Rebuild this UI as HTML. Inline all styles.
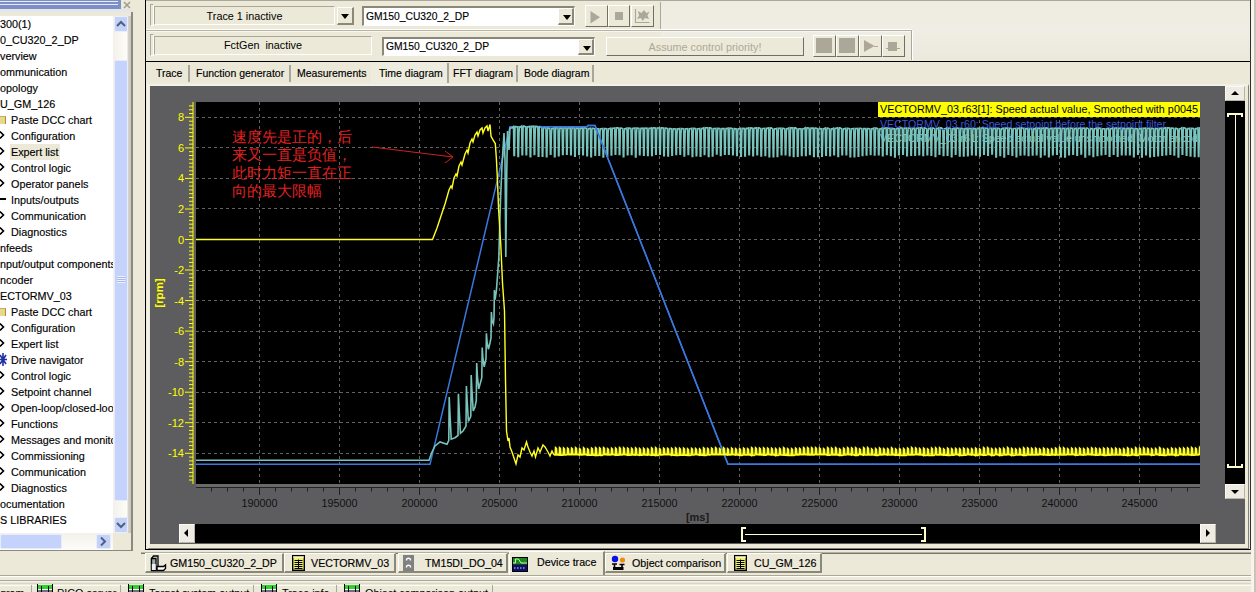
<!DOCTYPE html>
<html><head><meta charset="utf-8">
<style>
*{margin:0;padding:0;box-sizing:border-box}
html,body{width:1256px;height:592px;overflow:hidden;background:#ece9d8;font-family:"Liberation Sans", sans-serif;font-size:11px;color:#000}
.a{position:absolute}
.tr{position:absolute;white-space:nowrap;font-size:10.8px;line-height:16px;height:16px;-webkit-text-stroke:0.15px #000}
.ic{position:absolute;left:0}
.yl{position:absolute;left:160px;width:24px;text-align:right;color:#ffff00;font-size:11px;line-height:14px}
.xl{position:absolute;top:496px;width:50px;text-align:center;color:#111;font-size:10.8px;line-height:14px}
.tab{position:absolute;top:65px;height:17px;font-size:10.5px;-webkit-text-stroke:0.15px #000;line-height:17px;white-space:nowrap;border-right:2px solid #a7a69a;background:#ebe8d8}
.btab{position:absolute;-webkit-text-stroke:0.15px #000;top:553px;height:20px;background:#ece9d8;border:1px solid #fff;border-right:2px solid #8a8878;border-bottom:2px solid #8a8878;font-size:10.7px;line-height:19px;white-space:nowrap}
.sunk{position:absolute;border-top:1px solid #aca899;border-left:1px solid #aca899;border-bottom:1px solid #fff;border-right:1px solid #fff}
.sb{position:absolute;background:#eeece2;border-top:1px solid #fafaf4;border-left:1px solid #fafaf4;border-bottom:1px solid #b8b4a6;border-right:1px solid #b8b4a6}
.tb{position:absolute;background:#ece9d8;border-top:1px solid #fff;border-left:1px solid #fff;border-bottom:1px solid #716f64;border-right:1px solid #716f64}
.rais{position:absolute;background:#ece9d8;border-top:1px solid #fff;border-left:1px solid #fff;border-bottom:2px solid #8a8878;border-right:2px solid #8a8878}
.combo{position:absolute;-webkit-text-stroke:0.15px #000;background:#fff;border-top:2px solid #8a8878;border-left:2px solid #8a8878;border-bottom:1px solid #fff;border-right:1px solid #fff;font-size:10.3px;line-height:16px;white-space:nowrap;padding-left:2px}
.dd{position:absolute;top:0;right:0;width:16px;height:100%;background:#ece9d8;border-top:1px solid #fff;border-left:1px solid #fff;border-bottom:2px solid #8a8878;border-right:2px solid #8a8878}
.dd:after{content:"";position:absolute;left:4px;top:6px;border-left:4px solid transparent;border-right:4px solid transparent;border-top:5px solid #000}
</style></head><body>
<!-- LEFT PANEL -->
<div class="a" style="left:0;top:0;width:121px;height:9px;background:#7d8fc4"></div>
<div class="a" style="left:0;top:1px;width:118px;height:1px;background:#e6ecff"></div>
<div class="a" style="left:0;top:4px;width:118px;height:1px;background:#e6ecff"></div>
<div class="a" style="left:0;top:9px;width:132px;height:3px;background:#e4e6ee"></div>
<svg class="a" style="left:123px;top:1px" width="8" height="8"><path d="M1 1L7 7M7 1L1 7" stroke="#a09c90" stroke-width="1.5"/></svg>
<div class="a" style="left:0;top:16px;width:114px;height:517px;background:#fff;overflow:hidden">
<div class="tr" style="left:0px;top:-0.5px">300(1)</div><div class="tr" style="left:0px;top:15.5px">0_CU320_2_DP</div><div class="tr" style="left:0px;top:31.5px">verview</div><div class="tr" style="left:0px;top:47.5px">ommunication</div><div class="tr" style="left:0px;top:63.5px">opology</div><div class="tr" style="left:0px;top:79.5px">U_GM_126</div><div style="position:absolute;left:0;top:99.5px;width:6px;height:8px;background:#e8d88a;border-top:1px solid #c8b060;border-right:1px solid #a89040"></div><div class="tr" style="left:11px;top:95.5px">Paste DCC chart</div><svg class="ic" style="top:113.5px" width="6" height="10"><path d="M0 1.5L3.5 5L0 8.5" stroke="#000" stroke-width="1.6" fill="none"/></svg><div class="tr" style="left:11px;top:111.5px">Configuration</div><div style="position:absolute;left:10px;top:127.5px;width:50px;height:16px;background:#ece9d8"></div><svg class="ic" style="top:129.5px" width="6" height="10"><path d="M0 1.5L3.5 5L0 8.5" stroke="#000" stroke-width="1.6" fill="none"/></svg><div class="tr" style="left:11px;top:127.5px">Expert list</div><svg class="ic" style="top:145.5px" width="6" height="10"><path d="M0 1.5L3.5 5L0 8.5" stroke="#000" stroke-width="1.6" fill="none"/></svg><div class="tr" style="left:11px;top:143.5px">Control logic</div><svg class="ic" style="top:161.5px" width="6" height="10"><path d="M0 1.5L3.5 5L0 8.5" stroke="#000" stroke-width="1.6" fill="none"/></svg><div class="tr" style="left:11px;top:159.5px">Operator panels</div><div style="position:absolute;left:0;top:181.5px;width:6px;height:2px;background:#000"></div><div class="tr" style="left:11px;top:175.5px">Inputs/outputs</div><svg class="ic" style="top:193.5px" width="6" height="10"><path d="M0 1.5L3.5 5L0 8.5" stroke="#000" stroke-width="1.6" fill="none"/></svg><div class="tr" style="left:11px;top:191.5px">Communication</div><svg class="ic" style="top:209.5px" width="6" height="10"><path d="M0 1.5L3.5 5L0 8.5" stroke="#000" stroke-width="1.6" fill="none"/></svg><div class="tr" style="left:11px;top:207.5px">Diagnostics</div><div class="tr" style="left:0px;top:223.5px">nfeeds</div><div class="tr" style="left:0px;top:239.5px">nput/output components</div><div class="tr" style="left:0px;top:255.5px">ncoder</div><div class="tr" style="left:0px;top:271.5px">ECTORMV_03</div><div style="position:absolute;left:0;top:291.5px;width:6px;height:8px;background:#e8d88a;border-top:1px solid #c8b060;border-right:1px solid #a89040"></div><div class="tr" style="left:11px;top:287.5px">Paste DCC chart</div><svg class="ic" style="top:305.5px" width="6" height="10"><path d="M0 1.5L3.5 5L0 8.5" stroke="#000" stroke-width="1.6" fill="none"/></svg><div class="tr" style="left:11px;top:303.5px">Configuration</div><svg class="ic" style="top:321.5px" width="6" height="10"><path d="M0 1.5L3.5 5L0 8.5" stroke="#000" stroke-width="1.6" fill="none"/></svg><div class="tr" style="left:11px;top:319.5px">Expert list</div><svg class="ic" style="top:336.5px" width="8" height="13"><path d="M0 2L6 11M6 2L0 11M0 6.5H7M3 0V13" stroke="#2030a0" stroke-width="1.6" fill="none"/></svg><div class="tr" style="left:11px;top:335.5px">Drive navigator</div><svg class="ic" style="top:353.5px" width="6" height="10"><path d="M0 1.5L3.5 5L0 8.5" stroke="#000" stroke-width="1.6" fill="none"/></svg><div class="tr" style="left:11px;top:351.5px">Control logic</div><svg class="ic" style="top:369.5px" width="6" height="10"><path d="M0 1.5L3.5 5L0 8.5" stroke="#000" stroke-width="1.6" fill="none"/></svg><div class="tr" style="left:11px;top:367.5px">Setpoint channel</div><svg class="ic" style="top:385.5px" width="6" height="10"><path d="M0 1.5L3.5 5L0 8.5" stroke="#000" stroke-width="1.6" fill="none"/></svg><div class="tr" style="left:11px;top:383.5px">Open-loop/closed-loop control</div><svg class="ic" style="top:401.5px" width="6" height="10"><path d="M0 1.5L3.5 5L0 8.5" stroke="#000" stroke-width="1.6" fill="none"/></svg><div class="tr" style="left:11px;top:399.5px">Functions</div><svg class="ic" style="top:417.5px" width="6" height="10"><path d="M0 1.5L3.5 5L0 8.5" stroke="#000" stroke-width="1.6" fill="none"/></svg><div class="tr" style="left:11px;top:415.5px">Messages and monitoring</div><svg class="ic" style="top:433.5px" width="6" height="10"><path d="M0 1.5L3.5 5L0 8.5" stroke="#000" stroke-width="1.6" fill="none"/></svg><div class="tr" style="left:11px;top:431.5px">Commissioning</div><svg class="ic" style="top:449.5px" width="6" height="10"><path d="M0 1.5L3.5 5L0 8.5" stroke="#000" stroke-width="1.6" fill="none"/></svg><div class="tr" style="left:11px;top:447.5px">Communication</div><svg class="ic" style="top:465.5px" width="6" height="10"><path d="M0 1.5L3.5 5L0 8.5" stroke="#000" stroke-width="1.6" fill="none"/></svg><div class="tr" style="left:11px;top:463.5px">Diagnostics</div><div class="tr" style="left:0px;top:479.5px">ocumentation</div><div class="tr" style="left:0px;top:495.5px">S LIBRARIES</div>
</div>
<!-- left v scrollbar -->
<div class="a" style="left:113px;top:16px;width:18px;height:517px;background:linear-gradient(90deg,#f3f1ea 0,#fdfcf8 14px,#d8d6cc 15px,#c8c6bc 18px)"></div>
<div class="a" style="left:114px;top:16px;width:14px;height:16px;background:#c4d2f8;border:1px solid #e8eefc;border-radius:2px"></div>
<svg class="a" style="left:116px;top:20px" width="10" height="8"><path d="M1 6L5 2L9 6" stroke="#4d6185" stroke-width="2" fill="none"/></svg>
<div class="a" style="left:114px;top:60px;width:14px;height:441px;background:#c4d2fc;border:1px solid #e6ecfc;border-radius:2px"></div>
<div class="a" style="left:117px;top:276px;width:8px;height:7px;background:repeating-linear-gradient(180deg,#eef2fe 0 1px,#a8b8e8 1px 2px)"></div>
<div class="a" style="left:114px;top:517px;width:14px;height:16px;background:#c4d2f8;border:1px solid #e8eefc;border-radius:2px"></div>
<svg class="a" style="left:116px;top:521px" width="10" height="8"><path d="M1 2L5 6L9 2" stroke="#4d6185" stroke-width="2" fill="none"/></svg>
<!-- left h scrollbar -->
<div class="a" style="left:0;top:533px;width:113px;height:17px;background:linear-gradient(180deg,#f3f1ea,#fdfcf8)"></div>
<div class="a" style="left:0;top:534px;width:62px;height:15px;background:#c4d2fc;border:1px solid #e6ecfc;border-radius:2px"></div>
<div class="a" style="left:96px;top:534px;width:15px;height:15px;background:#c4d2f8;border:1px solid #e8eefc;border-radius:2px"></div>
<svg class="a" style="left:99px;top:536px" width="9" height="11"><path d="M2 1.5L6 5.5L2 9.5" stroke="#4d6185" stroke-width="2" fill="none"/></svg>
<div class="a" style="left:113px;top:533px;width:19px;height:17px;background:#ece9d8"></div>
<div class="a" style="left:131px;top:12px;width:2px;height:539px;background:#8c8a80"></div>
<div class="a" style="left:0;top:550px;width:133px;height:1px;background:#8c8a80"></div>

<!-- MAIN FRAME -->
<div class="a" style="left:145px;top:0;width:1px;height:550px;background:#000"></div>
<div class="a" style="left:1250px;top:0;width:1px;height:550px;background:#303030"></div>
<div class="a" style="left:1251px;top:0;width:3px;height:592px;background:#f6f4ec"></div>
<div class="a" style="left:1254px;top:0;width:2px;height:592px;background:#c8c4b8"></div>
<div class="a" style="left:146px;top:0;width:1104px;height:1px;background:#aca899"></div>
<!-- toolbar row 1 -->
<div class="sunk" style="left:150px;top:4px;width:4px;height:22px"></div>
<div class="sunk" style="left:154px;top:6px;width:181px;height:19px"></div>
<div class="a" style="left:155px;top:8px;width:179px;height:17px;text-align:center;font-size:10.8px;line-height:17px">Trace 1 inactive</div>
<div class="rais" style="left:337px;top:7px;width:17px;height:18px"></div>
<div class="a" style="left:341px;top:14px;border-left:4px solid transparent;border-right:4px solid transparent;border-top:5px solid #000;width:0;height:0"></div>
<div class="combo" style="left:362px;top:6px;width:213px;height:20px;line-height:17px">GM150_CU320_2_DP<div class="dd"></div></div>
<div class="tb" style="left:585px;top:5px;width:23px;height:22px"></div>
<div class="tb" style="left:608px;top:5px;width:22px;height:22px"></div>
<div class="tb" style="left:631px;top:5px;width:23px;height:22px"></div>
<svg class="a" style="left:589px;top:8px" width="16" height="18"><path d="M1.5 3L11 9.2L1.5 15.5Z" fill="#aca899"/></svg>
<div class="a" style="left:615px;top:12px;width:8px;height:8px;background:#aca899"></div>
<svg class="a" style="left:633px;top:7px" width="19" height="18"><path d="M2.5 2V15.5H16.5" stroke="#aca899" stroke-width="1.2" fill="none"/><path d="M5 4L8.5 6L11 3L13.5 6L16.5 4.5L14.5 8.5L16 12L12 11L9.5 14L8 11L4 12L6 8.5Z" fill="#aca899"/></svg>
<div class="a" style="left:660px;top:2px;width:1px;height:28px;background:#aca899"></div>
<div class="a" style="left:661px;top:2px;width:1px;height:28px;background:#fff"></div>
<div class="a" style="left:661px;top:1px;width:589px;height:59px;background:linear-gradient(180deg,#eeece0,#f0eee4 50%,#ebe8dc)"></div>
<div class="a" style="left:146px;top:29px;width:766px;height:1px;background:#fff"></div>
<div class="a" style="left:146px;top:30px;width:766px;height:1px;background:#b8b4a4"></div>
<div class="a" style="left:146px;top:31px;width:766px;height:1px;background:#f8f6ee"></div>
<div class="a" style="left:912px;top:31px;width:1px;height:29px;background:#fff"></div>
<!-- toolbar row 2 -->
<div class="sunk" style="left:150px;top:34px;width:4px;height:22px"></div>
<div class="sunk" style="left:154px;top:36px;width:218px;height:19px"></div>
<div class="a" style="left:155px;top:37px;width:216px;height:17px;text-align:center;font-size:10.8px;line-height:17px">FctGen&nbsp; inactive</div>
<div class="combo" style="left:382px;top:37px;width:213px;height:19px;line-height:16px">GM150_CU320_2_DP<div class="dd"></div></div>
<div class="a" style="left:606px;top:37px;width:198px;height:19px;background:#ece9d8;border-top:1px solid #fff;border-left:1px solid #fff;border-bottom:1px solid #716f64;border-right:1px solid #716f64;color:#aca899;text-align:center;font-size:10.8px;line-height:18px">Assume control priority!</div>
<div class="tb" style="left:813px;top:35px;width:23px;height:22px"></div>
<div class="tb" style="left:836px;top:35px;width:23px;height:22px"></div>
<div class="tb" style="left:859px;top:35px;width:23px;height:22px"></div>
<div class="tb" style="left:882px;top:35px;width:23px;height:22px"></div>
<div class="a" style="left:816px;top:38px;width:16px;height:15px;background:#aca899"></div>
<div class="a" style="left:839px;top:38px;width:16px;height:15px;background:#aca899"></div>
<svg class="a" style="left:862px;top:38px" width="18" height="16"><path d="M2 2L12.5 8L2 14Z" fill="#aca899"/><path d="M12 8.5H16" stroke="#aca899"/></svg>
<div class="a" style="left:888px;top:42px;width:9px;height:9px;background:#aca899"></div>
<div class="a" style="left:886px;top:48px;width:14px;height:1px;background:#aca899"></div>
<div class="a" style="left:911px;top:31px;width:1px;height:29px;background:#aca899"></div>
<div class="a" style="left:146px;top:61px;width:1104px;height:1px;background:#000"></div>
<!-- tabs -->
<div class="tab" style="left:150px;width:40px;padding-left:6px">Trace</div>
<div class="tab" style="left:190px;width:101px;padding-left:6px">Function generator</div>
<div class="tab" style="left:291px;width:80px;padding-left:6px;border-right:none">Measurements</div>
<div class="tab" style="left:371px;top:63px;height:20px;width:78px;padding-left:8px;background:#eeecdf;line-height:21px">Time diagram</div>
<div class="tab" style="left:449px;width:69px;padding-left:4px">FFT diagram</div>
<div class="tab" style="left:518px;width:76px;padding-left:6px">Bode diagram</div>

<!-- CHART -->
<div class="a" style="left:147px;top:84px;width:1102px;height:465px;border-top:2px solid #f2f0e8;border-left:2px solid #f2f0e8;border-right:1px solid #808080;border-bottom:1px solid #808080"></div>
<div class="a" style="left:150px;top:86px;width:1095px;height:458px;background:#5d5d5f"></div>
<div class="a" style="left:196px;top:102px;width:1004px;height:382px;background:#000"></div>
<div class="a" style="left:196px;top:484px;width:1004px;height:3px;background:#6a6a6a"></div>
<div class="a" style="left:880px;top:131px;width:320px;overflow:hidden;color:#98d8d0;font-size:10.6px;line-height:14px;white-space:nowrap">VECTORMV_03.r61: Speed actual value unsmoothed, Motor encoder</div>
<svg width="1256" height="592" style="position:absolute;left:0;top:0">
<defs><clipPath id="pc"><rect x="196" y="102" width="1004" height="382"/></clipPath></defs>
<path d="M259.5 102V484M339.5 102V484M419.5 102V484M499.5 102V484M579.5 102V484M659.5 102V484M739.5 102V484M819.5 102V484M899.5 102V484M979.5 102V484M1059.5 102V484M1139.5 102V484M196 117.5H1200M196 147.5H1200M196 178.5H1200M196 208.5H1200M196 239.5H1200M196 270.5H1200M196 300.5H1200M196 331.5H1200M196 361.5H1200M196 392.5H1200M196 422.5H1200M196 453.5H1200" stroke="#626262" stroke-width="1" stroke-dasharray="3 3" fill="none" shape-rendering="crispEdges"/>
<g clip-path="url(#pc)">
<polyline points="196.0,464.3 430.0,464.3 510.0,126.8 587.0,126.8 588.0,125.5 595.0,125.5 728.0,464.3 1200.0,464.3" fill="none" stroke="#3a78e0" stroke-width="1.5"/>
<polyline points="196.0,460.2 429.0,460.2 432.0,452.0 435.0,446.0 440.0,442.0 447.0,444.3 448.8,440.4 449.2,397.0 449.9,412.2 451.2,439.2 455.0,437.7 458.0,435.5 458.4,393.7 459.1,408.3 460.4,433.3 463.0,431.0 466.0,426.1 466.4,386.0 467.1,400.0 468.4,421.5 470.0,418.0 470.8,416.2 471.2,375.0 471.9,389.4 473.2,411.0 475.0,407.0 476.3,400.3 476.7,363.0 477.4,376.0 478.7,389.0 481.8,377.7 482.2,347.6 482.9,358.1 484.2,366.9 486.0,358.6 486.4,333.3 487.1,342.2 488.4,349.2 490.0,343.0 491.0,338.0 491.4,312.0 492.1,321.1 493.4,323.9 494.0,317.6 494.4,290.0 495.1,299.7 496.4,290.5 498.8,258.0 500.5,200.0 502.0,165.0 504.0,133.0 505.0,160.0 505.8,257.0 506.8,170.0 507.5,131.0 509.0,150.0 510.0,128.0 512.0,128.0 513.5,126.6 514.0,155.5 514.5,155.5 515.0,128.0 515.4,126.6 516.0,126.6 517.5,127.1 518.0,156.4 518.5,156.4 519.0,132.9 519.4,127.1 520.1,127.1 521.6,126.0 522.1,154.8 522.6,154.8 523.1,127.2 523.5,126.0 524.1,126.0 525.6,126.8 526.1,154.8 526.6,154.8 527.1,128.5 527.5,126.8 528.2,126.8 529.7,126.4 530.2,156.7 530.7,156.7 531.2,131.5 531.6,126.4 532.2,126.4 533.7,126.2 534.2,154.4 534.7,154.4 535.2,131.8 535.6,126.2 536.3,126.2 537.8,126.6 538.3,156.1 538.8,156.1 539.3,128.0 539.7,126.6 540.3,126.6 541.8,127.8 542.3,156.1 542.8,156.1 543.3,130.9 543.7,127.8 544.4,127.8 545.9,127.8 546.4,156.8 546.9,156.8 547.4,132.0 547.8,127.8 548.4,127.8 549.9,128.7 550.4,154.3 550.9,154.3 551.4,133.9 551.8,128.7 552.5,128.7 554.0,127.8 554.5,156.6 555.0,156.6 555.5,131.0 555.9,127.8 556.5,127.8 558.0,128.1 558.5,155.7 559.0,155.7 559.5,133.7 559.9,128.1 560.6,128.1 562.1,128.0 562.6,154.4 563.1,154.4 563.6,131.7 564.0,128.0 564.6,128.0 566.1,128.0 566.6,154.3 567.1,154.3 567.6,129.8 568.0,128.0 568.7,128.0 570.2,127.8 570.7,154.6 571.2,154.6 571.7,130.3 572.1,127.8 572.7,127.8 574.2,128.1 574.7,156.3 575.2,156.3 575.7,130.5 576.1,128.1 576.8,128.1 578.3,128.3 578.8,154.5 579.3,154.5 579.8,131.0 580.2,128.3 580.8,128.3 582.3,127.7 582.8,154.8 583.3,154.8 583.8,128.8 584.2,127.7 584.9,127.7 586.4,128.6 586.9,155.7 587.4,155.7 587.9,130.5 588.3,128.6 588.9,128.6 590.4,128.3 590.9,156.8 591.4,156.8 591.9,129.8 592.3,128.3 593.0,128.3 594.5,128.7 595.0,155.3 595.5,155.3 596.0,132.2 596.4,128.7 597.0,128.7 598.5,128.7 599.0,155.2 599.5,155.2 600.0,132.2 600.4,128.7 601.1,128.7 602.6,128.5 603.1,156.9 603.6,156.9 604.1,131.2 604.5,128.5 605.1,128.5 606.6,128.7 607.1,156.1 607.6,156.1 608.1,132.9 608.5,128.7 609.2,128.7 610.7,128.2 611.2,155.0 611.7,155.0 612.2,129.5 612.6,128.2 613.2,128.2 614.7,127.9 615.2,154.2 615.7,154.2 616.2,132.6 616.6,127.9 617.3,127.9 618.8,128.0 619.3,154.5 619.8,154.5 620.3,129.4 620.7,128.0 621.3,128.0 622.8,128.7 623.3,156.6 623.8,156.6 624.3,133.1 624.7,128.7 625.4,128.7 626.9,128.0 627.4,154.7 627.9,154.7 628.4,130.5 628.8,128.0 629.4,128.0 630.9,128.3 631.4,154.5 631.9,154.5 632.4,131.5 632.8,128.3 633.5,128.3 635.0,128.0 635.5,156.9 636.0,156.9 636.5,133.9 636.9,128.0 637.5,128.0 639.0,128.4 639.5,154.7 640.0,154.7 640.5,134.2 640.9,128.4 641.6,128.4 643.1,128.1 643.6,155.1 644.1,155.1 644.6,129.1 645.0,128.1 645.6,128.1 647.1,128.2 647.6,155.4 648.1,155.4 648.6,131.7 649.0,128.2 649.7,128.2 651.2,127.9 651.7,155.5 652.2,155.5 652.7,129.0 653.1,127.9 653.7,127.9 655.2,128.0 655.7,154.3 656.2,154.3 656.7,131.0 657.1,128.0 657.8,128.0 659.3,127.8 659.8,154.1 660.3,154.1 660.8,130.3 661.2,127.8 661.8,127.8 663.3,128.0 663.8,155.8 664.3,155.8 664.8,131.6 665.2,128.0 665.9,128.0 667.4,128.6 667.9,156.0 668.4,156.0 668.9,133.2 669.3,128.6 669.9,128.6 671.4,128.8 671.9,155.2 672.4,155.2 672.9,131.4 673.3,128.8 674.0,128.8 675.5,128.9 676.0,154.4 676.5,154.4 677.0,133.5 677.4,128.9 678.0,128.9 679.5,128.5 680.0,154.1 680.5,154.1 681.0,133.6 681.4,128.5 682.1,128.5 683.6,128.8 684.1,155.9 684.6,155.9 685.1,133.4 685.5,128.8 686.1,128.8 687.6,128.7 688.1,154.4 688.6,154.4 689.1,132.3 689.5,128.7 690.2,128.7 691.7,128.3 692.2,156.5 692.7,156.5 693.2,133.3 693.6,128.3 694.2,128.3 695.7,128.7 696.2,155.8 696.7,155.8 697.2,134.2 697.6,128.7 698.3,128.7 699.8,128.5 700.3,156.1 700.8,156.1 701.3,130.7 701.7,128.5 702.3,128.5 703.8,127.7 704.3,154.4 704.8,154.4 705.3,130.5 705.7,127.7 706.4,127.7 707.9,127.8 708.4,156.5 708.9,156.5 709.4,131.6 709.8,127.8 710.4,127.8 711.9,128.5 712.4,155.9 712.9,155.9 713.4,132.9 713.8,128.5 714.5,128.5 716.0,128.3 716.5,154.0 717.0,154.0 717.5,133.3 717.9,128.3 718.5,128.3 720.0,128.6 720.5,155.5 721.0,155.5 721.5,132.3 721.9,128.6 722.6,128.6 724.1,128.5 724.6,154.2 725.1,154.2 725.6,133.2 726.0,128.5 726.6,128.5 728.1,128.0 728.6,154.2 729.1,154.2 729.6,130.3 730.0,128.0 730.7,128.0 732.2,128.6 732.7,154.6 733.2,154.6 733.7,133.3 734.1,128.6 734.7,128.6 736.2,128.9 736.7,155.5 737.2,155.5 737.7,131.8 738.1,128.9 738.8,128.9 740.3,128.3 740.8,156.1 741.3,156.1 741.8,133.1 742.2,128.3 742.8,128.3 744.3,128.4 744.8,155.9 745.3,155.9 745.8,129.8 746.2,128.4 746.9,128.4 748.4,127.9 748.9,154.8 749.4,154.8 749.9,132.6 750.3,127.9 750.9,127.9 752.4,128.1 752.9,155.7 753.4,155.7 753.9,129.1 754.3,128.1 755.0,128.1 756.5,127.8 757.0,154.8 757.5,154.8 758.0,132.1 758.4,127.8 759.0,127.8 760.5,128.5 761.0,156.0 761.5,156.0 762.0,131.0 762.4,128.5 763.1,128.5 764.6,128.3 765.1,155.4 765.6,155.4 766.1,131.7 766.5,128.3 767.1,128.3 768.6,127.8 769.1,156.7 769.6,156.7 770.1,129.8 770.5,127.8 771.2,127.8 772.7,128.9 773.2,156.8 773.7,156.8 774.2,130.0 774.6,128.9 775.2,128.9 776.7,128.3 777.2,156.5 777.7,156.5 778.2,134.1 778.6,128.3 779.3,128.3 780.8,128.2 781.3,154.8 781.8,154.8 782.3,130.3 782.7,128.2 783.3,128.2 784.8,128.8 785.3,154.6 785.8,154.6 786.3,132.7 786.7,128.8 787.4,128.8 788.9,127.9 789.4,155.6 789.9,155.6 790.4,133.6 790.8,127.9 791.4,127.9 792.9,127.9 793.4,156.5 793.9,156.5 794.4,131.4 794.8,127.9 795.5,127.9 797.0,128.8 797.5,156.1 798.0,156.1 798.5,130.9 798.9,128.8 799.5,128.8 801.0,128.8 801.5,155.5 802.0,155.5 802.5,129.9 802.9,128.8 803.6,128.8 805.1,127.7 805.6,155.5 806.1,155.5 806.6,131.0 807.0,127.7 807.6,127.7 809.1,128.1 809.6,154.4 810.1,154.4 810.6,130.8 811.0,128.1 811.7,128.1 813.2,128.1 813.7,156.5 814.2,156.5 814.7,129.1 815.1,128.1 815.7,128.1 817.2,128.6 817.7,156.5 818.2,156.5 818.7,130.2 819.1,128.6 819.8,128.6 821.3,128.8 821.8,156.1 822.3,156.1 822.8,134.3 823.2,128.8 823.8,128.8 825.3,128.0 825.8,155.1 826.3,155.1 826.8,131.0 827.2,128.0 827.9,128.0 829.4,128.9 829.9,155.8 830.4,155.8 830.9,131.7 831.3,128.9 831.9,128.9 833.4,128.2 833.9,154.8 834.4,154.8 834.9,129.5 835.3,128.2 836.0,128.2 837.5,127.8 838.0,156.5 838.5,156.5 839.0,130.3 839.4,127.8 840.0,127.8 841.5,128.8 842.0,154.7 842.5,154.7 843.0,131.2 843.4,128.8 844.1,128.8 845.6,128.3 846.1,154.6 846.6,154.6 847.1,131.2 847.5,128.3 848.1,128.3 849.6,128.8 850.1,156.7 850.6,156.7 851.1,133.9 851.5,128.8 852.2,128.8 853.7,128.5 854.2,156.7 854.7,156.7 855.2,134.2 855.6,128.5 856.2,128.5 857.7,128.4 858.2,156.2 858.7,156.2 859.2,129.6 859.6,128.4 860.3,128.4 861.8,128.6 862.3,155.4 862.8,155.4 863.3,133.3 863.7,128.6 864.3,128.6 865.8,128.5 866.3,154.9 866.8,154.9 867.3,129.7 867.7,128.5 868.4,128.5 869.9,128.8 870.4,154.4 870.9,154.4 871.4,132.2 871.8,128.8 872.4,128.8 873.9,128.1 874.4,154.9 874.9,154.9 875.4,132.8 875.8,128.1 876.5,128.1 878.0,128.9 878.5,154.8 879.0,154.8 879.5,133.2 879.9,128.9 880.5,128.9 882.0,128.1 882.5,155.7 883.0,155.7 883.5,131.0 883.9,128.1 884.6,128.1 886.1,127.9 886.6,154.5 887.1,154.5 887.6,129.9 888.0,127.9 888.6,127.9 890.1,128.8 890.6,155.5 891.1,155.5 891.6,130.9 892.0,128.8 892.7,128.8 894.2,128.8 894.7,157.0 895.2,157.0 895.7,132.0 896.1,128.8 896.7,128.8 898.2,127.9 898.7,154.6 899.2,154.6 899.7,129.3 900.1,127.9 900.8,127.9 902.3,128.1 902.8,154.3 903.3,154.3 903.8,130.3 904.2,128.1 904.8,128.1 906.3,128.0 906.8,155.7 907.3,155.7 907.8,133.4 908.2,128.0 908.9,128.0 910.4,128.6 910.9,155.2 911.4,155.2 911.9,131.7 912.3,128.6 912.9,128.6 914.4,128.3 914.9,155.1 915.4,155.1 915.9,131.0 916.3,128.3 917.0,128.3 918.5,127.8 919.0,154.8 919.5,154.8 920.0,133.6 920.4,127.8 921.0,127.8 922.5,127.9 923.0,155.5 923.5,155.5 924.0,132.0 924.4,127.9 925.1,127.9 926.6,128.7 927.1,154.6 927.6,154.6 928.1,131.1 928.5,128.7 929.1,128.7 930.6,128.0 931.1,155.2 931.6,155.2 932.1,131.2 932.5,128.0 933.2,128.0 934.7,128.8 935.2,156.5 935.7,156.5 936.2,134.2 936.6,128.8 937.2,128.8 938.7,127.7 939.2,154.1 939.7,154.1 940.2,132.3 940.6,127.7 941.3,127.7 942.8,128.8 943.3,155.4 943.8,155.4 944.3,132.7 944.7,128.8 945.3,128.8 946.8,127.7 947.3,155.2 947.8,155.2 948.3,133.3 948.7,127.7 949.4,127.7 950.9,128.7 951.4,156.6 951.9,156.6 952.4,134.6 952.8,128.7 953.4,128.7 954.9,128.0 955.4,154.3 955.9,154.3 956.4,129.8 956.8,128.0 957.5,128.0 959.0,128.3 959.5,156.0 960.0,156.0 960.5,134.0 960.9,128.3 961.5,128.3 963.0,128.6 963.5,155.9 964.0,155.9 964.5,133.4 964.9,128.6 965.6,128.6 967.1,128.2 967.6,155.7 968.1,155.7 968.6,129.4 969.0,128.2 969.6,128.2 971.1,128.6 971.6,154.7 972.1,154.7 972.6,134.2 973.0,128.6 973.7,128.6 975.2,128.5 975.7,154.9 976.2,154.9 976.7,130.1 977.1,128.5 977.7,128.5 979.2,128.0 979.7,155.9 980.2,155.9 980.7,132.5 981.1,128.0 981.8,128.0 983.3,127.8 983.8,154.2 984.3,154.2 984.8,131.5 985.2,127.8 985.8,127.8 987.3,128.4 987.8,155.2 988.3,155.2 988.8,130.5 989.2,128.4 989.9,128.4 991.4,128.4 991.9,154.0 992.4,154.0 992.9,130.9 993.3,128.4 993.9,128.4 995.4,128.3 995.9,156.9 996.4,156.9 996.9,132.5 997.3,128.3 998.0,128.3 999.5,128.8 1000.0,155.4 1000.5,155.4 1001.0,130.9 1001.4,128.8 1002.0,128.8 1003.5,128.0 1004.0,156.9 1004.5,156.9 1005.0,132.5 1005.4,128.0 1006.1,128.0 1007.6,128.1 1008.1,154.1 1008.6,154.1 1009.1,131.6 1009.5,128.1 1010.1,128.1 1011.6,128.5 1012.1,155.3 1012.6,155.3 1013.1,130.8 1013.5,128.5 1014.2,128.5 1015.7,128.5 1016.2,156.8 1016.7,156.8 1017.2,130.6 1017.6,128.5 1018.2,128.5 1019.7,127.7 1020.2,155.0 1020.7,155.0 1021.2,130.8 1021.6,127.7 1022.3,127.7 1023.8,128.5 1024.3,154.6 1024.8,154.6 1025.3,133.5 1025.7,128.5 1026.3,128.5 1027.8,128.6 1028.3,155.5 1028.8,155.5 1029.3,130.6 1029.7,128.6 1030.4,128.6 1031.9,128.9 1032.4,154.9 1032.9,154.9 1033.4,134.0 1033.8,128.9 1034.4,128.9 1035.9,128.0 1036.4,154.7 1036.9,154.7 1037.4,132.8 1037.8,128.0 1038.5,128.0 1040.0,128.1 1040.5,156.9 1041.0,156.9 1041.5,131.5 1041.9,128.1 1042.5,128.1 1044.0,127.9 1044.5,154.7 1045.0,154.7 1045.5,131.0 1045.9,127.9 1046.6,127.9 1048.1,128.5 1048.6,156.8 1049.1,156.8 1049.6,130.2 1050.0,128.5 1050.6,128.5 1052.1,128.2 1052.6,154.6 1053.1,154.6 1053.6,134.0 1054.0,128.2 1054.7,128.2 1056.2,127.9 1056.7,154.2 1057.2,154.2 1057.7,129.2 1058.1,127.9 1058.7,127.9 1060.2,128.2 1060.7,156.7 1061.2,156.7 1061.7,133.6 1062.1,128.2 1062.8,128.2 1064.3,128.6 1064.8,157.0 1065.3,157.0 1065.8,134.2 1066.2,128.6 1066.8,128.6 1068.3,128.1 1068.8,154.6 1069.3,154.6 1069.8,133.8 1070.2,128.1 1070.9,128.1 1072.4,128.6 1072.9,154.1 1073.4,154.1 1073.9,132.9 1074.3,128.6 1074.9,128.6 1076.4,128.2 1076.9,155.1 1077.4,155.1 1077.9,130.8 1078.3,128.2 1079.0,128.2 1080.5,127.9 1081.0,154.0 1081.5,154.0 1082.0,130.3 1082.4,127.9 1083.0,127.9 1084.5,128.1 1085.0,156.9 1085.5,156.9 1086.0,129.7 1086.4,128.1 1087.1,128.1 1088.6,128.9 1089.1,154.6 1089.6,154.6 1090.1,131.6 1090.5,128.9 1091.1,128.9 1092.6,128.7 1093.1,156.5 1093.6,156.5 1094.1,131.8 1094.5,128.7 1095.2,128.7 1096.7,127.8 1097.2,155.4 1097.7,155.4 1098.2,130.6 1098.6,127.8 1099.2,127.8 1100.7,128.8 1101.2,154.6 1101.7,154.6 1102.2,131.6 1102.6,128.8 1103.3,128.8 1104.8,128.8 1105.3,154.1 1105.8,154.1 1106.3,131.8 1106.7,128.8 1107.3,128.8 1108.8,128.7 1109.3,156.3 1109.8,156.3 1110.3,129.9 1110.7,128.7 1111.4,128.7 1112.9,127.7 1113.4,154.2 1113.9,154.2 1114.4,133.3 1114.8,127.7 1115.4,127.7 1116.9,128.0 1117.4,156.2 1117.9,156.2 1118.4,133.5 1118.8,128.0 1119.5,128.0 1121.0,128.1 1121.5,154.8 1122.0,154.8 1122.5,133.9 1122.9,128.1 1123.5,128.1 1125.0,128.4 1125.5,154.8 1126.0,154.8 1126.5,133.0 1126.9,128.4 1127.6,128.4 1129.1,128.1 1129.6,154.8 1130.1,154.8 1130.6,129.1 1131.0,128.1 1131.6,128.1 1133.1,128.6 1133.6,156.7 1134.1,156.7 1134.6,132.8 1135.0,128.6 1135.7,128.6 1137.2,128.8 1137.7,154.1 1138.2,154.1 1138.7,131.0 1139.1,128.8 1139.7,128.8 1141.2,128.3 1141.7,156.9 1142.2,156.9 1142.7,134.0 1143.1,128.3 1143.8,128.3 1145.3,128.2 1145.8,154.8 1146.3,154.8 1146.8,131.3 1147.2,128.2 1147.8,128.2 1149.3,128.3 1149.8,156.8 1150.3,156.8 1150.8,130.2 1151.2,128.3 1151.9,128.3 1153.4,128.7 1153.9,156.2 1154.4,156.2 1154.9,133.8 1155.3,128.7 1155.9,128.7 1157.4,128.6 1157.9,155.8 1158.4,155.8 1158.9,131.3 1159.3,128.6 1160.0,128.6 1161.5,128.1 1162.0,155.1 1162.5,155.1 1163.0,133.0 1163.4,128.1 1164.0,128.1 1165.5,127.8 1166.0,154.6 1166.5,154.6 1167.0,132.6 1167.4,127.8 1168.1,127.8 1169.6,128.0 1170.1,154.2 1170.6,154.2 1171.1,129.2 1171.5,128.0 1172.1,128.0 1173.6,128.4 1174.1,155.0 1174.6,155.0 1175.1,134.3 1175.5,128.4 1176.2,128.4 1177.7,128.8 1178.2,157.0 1178.7,157.0 1179.2,131.1 1179.6,128.8 1180.2,128.8 1181.7,127.8 1182.2,154.3 1182.7,154.3 1183.2,131.3 1183.6,127.8 1184.3,127.8 1185.8,128.6 1186.3,155.3 1186.8,155.3 1187.3,130.7 1187.7,128.6 1188.3,128.6 1189.8,128.2 1190.3,155.9 1190.8,155.9 1191.3,132.6 1191.7,128.2 1192.4,128.2 1193.9,128.6 1194.4,156.5 1194.9,156.5 1195.4,132.9 1195.8,128.6 1196.4,128.6 1197.9,127.8 1198.4,156.5 1198.9,156.5 1199.4,130.3 1199.8,127.8 1200.0,127.8" fill="none" stroke="#78c4bc" stroke-width="1.6"/>
<polyline points="540,126.8 587,126.8 588,125.5 595,125.5 728,464.3 1200,464.3" fill="none" stroke="#3a78e0" stroke-width="1.5"/>
<polyline points="196.0,239.5 432.5,239.5 437.0,228.0 441.0,216.0 445.0,204.0 449.0,190.0 451.0,186.0 452.0,188.0 454.0,178.0 456.0,174.0 457.0,176.0 459.0,166.0 461.0,162.0 462.0,165.0 465.0,154.0 467.0,150.0 468.0,153.0 470.0,143.0 472.0,139.0 473.0,142.0 475.0,135.0 477.0,132.0 478.0,136.0 480.0,130.0 482.0,128.0 483.0,133.0 485.0,128.0 487.0,126.0 488.0,131.0 490.0,124.5 491.0,136.0 493.0,140.0 495.3,143.6 496.4,159.0 497.5,181.0 498.6,209.5 500.8,245.0 502.5,283.0 504.5,311.0 505.5,380.0 506.5,431.0 508.0,441.0 509.0,438.0 510.0,447.0 512.0,452.0 514.0,458.0 516.0,464.0 518.0,455.0 520.0,457.0 522.0,448.0 524.0,450.0 526.5,442.0 528.0,447.0 530.0,452.0 532.0,456.0 534.0,451.0 535.5,457.0 538.0,448.0 540.0,452.0 543.0,445.0 545.0,447.0 548.0,452.0 550.0,456.0 552.0,451.0 554.0,455.0" fill="none" stroke="#ffff20" stroke-width="1.4"/>
<polyline points="554.0,455.0 555.2,454.9 555.6,447.8 556.4,448.5 556.9,454.9 558.0,454.9 559.2,455.1 559.6,447.7 560.4,448.4 560.9,455.1 562.0,455.1 563.2,455.0 563.6,448.1 564.4,448.8 564.9,455.0 566.0,455.0 567.2,454.6 567.6,448.3 568.4,449.0 568.9,454.6 570.0,454.6 571.2,454.6 571.6,448.2 572.4,448.9 572.9,454.6 574.0,454.6 575.2,454.7 575.6,447.7 576.4,448.4 576.9,454.7 578.0,454.7 579.2,454.9 579.6,448.8 580.4,449.5 580.9,454.9 582.0,454.9 583.2,454.7 583.6,447.9 584.4,448.6 584.9,454.7 586.0,454.7 587.2,455.1 587.6,448.9 588.4,449.6 588.9,455.1 590.0,455.1 591.2,455.1 591.6,448.2 592.4,448.9 592.9,455.1 594.0,455.1 595.2,455.4 595.6,447.7 596.4,448.4 596.9,455.4 598.0,455.4 599.2,455.3 599.6,448.0 600.4,448.7 600.9,455.3 602.0,455.3 603.2,454.7 603.6,447.8 604.4,448.5 604.9,454.7 606.0,454.7 607.2,454.8 607.6,448.7 608.4,449.4 608.9,454.8 610.0,454.8 611.2,454.7 611.6,448.4 612.4,449.1 612.9,454.7 614.0,454.7 615.2,455.1 615.6,448.1 616.4,448.8 616.9,455.1 618.0,455.1 619.2,455.0 619.6,447.7 620.4,448.4 620.9,455.0 622.0,455.0 623.2,454.6 623.6,447.9 624.4,448.6 624.9,454.6 626.0,454.6 627.2,455.1 627.6,448.2 628.4,448.9 628.9,455.1 630.0,455.1 631.2,454.9 631.6,448.4 632.4,449.1 632.9,454.9 634.0,454.9 635.2,455.0 635.6,448.0 636.4,448.7 636.9,455.0 638.0,455.0 639.2,455.2 639.6,448.6 640.4,449.3 640.9,455.2 642.0,455.2 643.2,454.8 643.6,448.4 644.4,449.1 644.9,454.8 646.0,454.8 647.2,455.0 647.6,448.8 648.4,449.5 648.9,455.0 650.0,455.0 651.2,455.2 651.6,448.0 652.4,448.7 652.9,455.2 654.0,455.2 655.2,455.4 655.6,447.8 656.4,448.5 656.9,455.4 658.0,455.4 659.2,454.9 659.6,448.7 660.4,449.4 660.9,454.9 662.0,454.9 663.2,454.7 663.6,448.3 664.4,449.0 664.9,454.7 666.0,454.7 667.2,454.6 667.6,448.5 668.4,449.2 668.9,454.6 670.0,454.6 671.2,455.2 671.6,448.4 672.4,449.1 672.9,455.2 674.0,455.2 675.2,455.3 675.6,448.0 676.4,448.7 676.9,455.3 678.0,455.3 679.2,455.2 679.6,448.4 680.4,449.1 680.9,455.2 682.0,455.2 683.2,455.1 683.6,448.2 684.4,448.9 684.9,455.1 686.0,455.1 687.2,455.3 687.6,448.9 688.4,449.6 688.9,455.3 690.0,455.3 691.2,455.0 691.6,448.5 692.4,449.2 692.9,455.0 694.0,455.0 695.2,454.6 695.6,448.6 696.4,449.3 696.9,454.6 698.0,454.6 699.2,455.1 699.6,449.0 700.4,449.7 700.9,455.1 702.0,455.1 703.2,455.3 703.6,448.0 704.4,448.7 704.9,455.3 706.0,455.3 707.2,454.9 707.6,448.5 708.4,449.2 708.9,454.9 710.0,454.9 711.2,454.6 711.6,448.2 712.4,448.9 712.9,454.6 714.0,454.6 715.2,454.7 715.6,447.8 716.4,448.5 716.9,454.7 718.0,454.7 719.2,454.6 719.6,448.7 720.4,449.4 720.9,454.6 722.0,454.6 723.2,454.7 723.6,447.9 724.4,448.6 724.9,454.7 726.0,454.7 727.2,454.9 727.6,448.8 728.4,449.5 728.9,454.9 730.0,454.9 731.2,454.7 731.6,448.2 732.4,448.9 732.9,454.7 734.0,454.7 735.2,455.0 735.6,448.8 736.4,449.5 736.9,455.0 738.0,455.0 739.2,455.3 739.6,448.8 740.4,449.5 740.9,455.3 742.0,455.3 743.2,454.8 743.6,448.2 744.4,448.9 744.9,454.8 746.0,454.8 747.2,454.9 747.6,448.8 748.4,449.5 748.9,454.9 750.0,454.9 751.2,455.4 751.6,447.8 752.4,448.5 752.9,455.4 754.0,455.4 755.2,454.7 755.6,447.9 756.4,448.6 756.9,454.7 758.0,454.7 759.2,454.8 759.6,448.3 760.4,449.0 760.9,454.8 762.0,454.8 763.2,455.1 763.6,448.0 764.4,448.7 764.9,455.1 766.0,455.1 767.2,454.6 767.6,448.2 768.4,448.9 768.9,454.6 770.0,454.6 771.2,454.9 771.6,448.4 772.4,449.1 772.9,454.9 774.0,454.9 775.2,455.4 775.6,448.6 776.4,449.3 776.9,455.4 778.0,455.4 779.2,455.0 779.6,448.5 780.4,449.2 780.9,455.0 782.0,455.0 783.2,455.1 783.6,447.7 784.4,448.4 784.9,455.1 786.0,455.1 787.2,455.3 787.6,448.7 788.4,449.4 788.9,455.3 790.0,455.3 791.2,455.3 791.6,448.7 792.4,449.4 792.9,455.3 794.0,455.3 795.2,454.9 795.6,448.2 796.4,448.9 796.9,454.9 798.0,454.9 799.2,454.7 799.6,448.5 800.4,449.2 800.9,454.7 802.0,454.7 803.2,454.6 803.6,447.7 804.4,448.4 804.9,454.6 806.0,454.6 807.2,454.8 807.6,447.8 808.4,448.5 808.9,454.8 810.0,454.8 811.2,454.9 811.6,447.7 812.4,448.4 812.9,454.9 814.0,454.9 815.2,454.6 815.6,447.8 816.4,448.5 816.9,454.6 818.0,454.6 819.2,454.7 819.6,448.1 820.4,448.8 820.9,454.7 822.0,454.7 823.2,454.6 823.6,448.8 824.4,449.5 824.9,454.6 826.0,454.6 827.2,455.1 827.6,447.8 828.4,448.5 828.9,455.1 830.0,455.1 831.2,454.8 831.6,448.1 832.4,448.8 832.9,454.8 834.0,454.8 835.2,454.9 835.6,447.8 836.4,448.5 836.9,454.9 838.0,454.9 839.2,455.3 839.6,449.0 840.4,449.7 840.9,455.3 842.0,455.3 843.2,455.0 843.6,448.3 844.4,449.0 844.9,455.0 846.0,455.0 847.2,454.7 847.6,447.7 848.4,448.4 848.9,454.7 850.0,454.7 851.2,454.9 851.6,448.0 852.4,448.7 852.9,454.9 854.0,454.9 855.2,455.3 855.6,447.8 856.4,448.5 856.9,455.3 858.0,455.3 859.2,454.6 859.6,448.9 860.4,449.6 860.9,454.6 862.0,454.6 863.2,455.0 863.6,447.8 864.4,448.5 864.9,455.0 866.0,455.0 867.2,455.0 867.6,447.6 868.4,448.3 868.9,455.0 870.0,455.0 871.2,455.0 871.6,449.0 872.4,449.7 872.9,455.0 874.0,455.0 875.2,455.3 875.6,448.6 876.4,449.3 876.9,455.3 878.0,455.3 879.2,454.8 879.6,448.1 880.4,448.8 880.9,454.8 882.0,454.8 883.2,454.7 883.6,448.7 884.4,449.4 884.9,454.7 886.0,454.7 887.2,455.0 887.6,448.7 888.4,449.4 888.9,455.0 890.0,455.0 891.2,454.9 891.6,447.9 892.4,448.6 892.9,454.9 894.0,454.9 895.2,455.2 895.6,449.0 896.4,449.7 896.9,455.2 898.0,455.2 899.2,455.3 899.6,448.7 900.4,449.4 900.9,455.3 902.0,455.3 903.2,455.3 903.6,448.6 904.4,449.3 904.9,455.3 906.0,455.3 907.2,454.8 907.6,448.3 908.4,449.0 908.9,454.8 910.0,454.8 911.2,454.9 911.6,447.6 912.4,448.3 912.9,454.9 914.0,454.9 915.2,454.6 915.6,448.0 916.4,448.7 916.9,454.6 918.0,454.6 919.2,454.8 919.6,448.6 920.4,449.3 920.9,454.8 922.0,454.8 923.2,455.4 923.6,448.2 924.4,448.9 924.9,455.4 926.0,455.4 927.2,455.3 927.6,449.0 928.4,449.7 928.9,455.3 930.0,455.3 931.2,455.4 931.6,448.1 932.4,448.8 932.9,455.4 934.0,455.4 935.2,454.8 935.6,447.9 936.4,448.6 936.9,454.8 938.0,454.8 939.2,454.8 939.6,447.9 940.4,448.6 940.9,454.8 942.0,454.8 943.2,455.1 943.6,448.9 944.4,449.6 944.9,455.1 946.0,455.1 947.2,455.3 947.6,448.3 948.4,449.0 948.9,455.3 950.0,455.3 951.2,455.1 951.6,448.7 952.4,449.4 952.9,455.1 954.0,455.1 955.2,454.7 955.6,448.5 956.4,449.2 956.9,454.7 958.0,454.7 959.2,455.3 959.6,448.7 960.4,449.4 960.9,455.3 962.0,455.3 963.2,455.2 963.6,448.3 964.4,449.0 964.9,455.2 966.0,455.2 967.2,454.7 967.6,448.7 968.4,449.4 968.9,454.7 970.0,454.7 971.2,454.9 971.6,448.7 972.4,449.4 972.9,454.9 974.0,454.9 975.2,455.4 975.6,448.2 976.4,448.9 976.9,455.4 978.0,455.4 979.2,454.9 979.6,448.9 980.4,449.6 980.9,454.9 982.0,454.9 983.2,455.2 983.6,447.8 984.4,448.5 984.9,455.2 986.0,455.2 987.2,454.7 987.6,447.8 988.4,448.5 988.9,454.7 990.0,454.7 991.2,455.3 991.6,448.7 992.4,449.4 992.9,455.3 994.0,455.3 995.2,454.7 995.6,448.8 996.4,449.5 996.9,454.7 998.0,454.7 999.2,455.4 999.6,448.5 1000.4,449.2 1000.9,455.4 1002.0,455.4 1003.2,454.9 1003.6,448.4 1004.4,449.1 1004.9,454.9 1006.0,454.9 1007.2,454.7 1007.6,447.6 1008.4,448.3 1008.9,454.7 1010.0,454.7 1011.2,455.4 1011.6,448.5 1012.4,449.2 1012.9,455.4 1014.0,455.4 1015.2,455.0 1015.6,448.9 1016.4,449.6 1016.9,455.0 1018.0,455.0 1019.2,454.9 1019.6,448.8 1020.4,449.5 1020.9,454.9 1022.0,454.9 1023.2,455.3 1023.6,447.9 1024.4,448.6 1024.9,455.3 1026.0,455.3 1027.2,454.8 1027.6,448.0 1028.4,448.7 1028.9,454.8 1030.0,454.8 1031.2,454.8 1031.6,448.4 1032.4,449.1 1032.9,454.8 1034.0,454.8 1035.2,454.8 1035.6,448.2 1036.4,448.9 1036.9,454.8 1038.0,454.8 1039.2,454.7 1039.6,448.9 1040.4,449.6 1040.9,454.7 1042.0,454.7 1043.2,454.9 1043.6,448.2 1044.4,448.9 1044.9,454.9 1046.0,454.9 1047.2,455.1 1047.6,448.9 1048.4,449.6 1048.9,455.1 1050.0,455.1 1051.2,454.9 1051.6,448.9 1052.4,449.6 1052.9,454.9 1054.0,454.9 1055.2,455.0 1055.6,448.3 1056.4,449.0 1056.9,455.0 1058.0,455.0 1059.2,455.0 1059.6,447.6 1060.4,448.3 1060.9,455.0 1062.0,455.0 1063.2,455.0 1063.6,447.9 1064.4,448.6 1064.9,455.0 1066.0,455.0 1067.2,454.6 1067.6,448.7 1068.4,449.4 1068.9,454.6 1070.0,454.6 1071.2,454.7 1071.6,448.3 1072.4,449.0 1072.9,454.7 1074.0,454.7 1075.2,455.2 1075.6,448.4 1076.4,449.1 1076.9,455.2 1078.0,455.2 1079.2,454.9 1079.6,448.3 1080.4,449.0 1080.9,454.9 1082.0,454.9 1083.2,455.0 1083.6,448.7 1084.4,449.4 1084.9,455.0 1086.0,455.0 1087.2,454.7 1087.6,448.4 1088.4,449.1 1088.9,454.7 1090.0,454.7 1091.2,454.8 1091.6,448.0 1092.4,448.7 1092.9,454.8 1094.0,454.8 1095.2,455.2 1095.6,448.3 1096.4,449.0 1096.9,455.2 1098.0,455.2 1099.2,455.0 1099.6,448.7 1100.4,449.4 1100.9,455.0 1102.0,455.0 1103.2,455.3 1103.6,448.2 1104.4,448.9 1104.9,455.3 1106.0,455.3 1107.2,455.1 1107.6,448.3 1108.4,449.0 1108.9,455.1 1110.0,455.1 1111.2,455.0 1111.6,448.6 1112.4,449.3 1112.9,455.0 1114.0,455.0 1115.2,455.0 1115.6,448.3 1116.4,449.0 1116.9,455.0 1118.0,455.0 1119.2,455.0 1119.6,448.9 1120.4,449.6 1120.9,455.0 1122.0,455.0 1123.2,455.2 1123.6,448.8 1124.4,449.5 1124.9,455.2 1126.0,455.2 1127.2,455.4 1127.6,448.0 1128.4,448.7 1128.9,455.4 1130.0,455.4 1131.2,455.0 1131.6,448.9 1132.4,449.6 1132.9,455.0 1134.0,455.0 1135.2,455.3 1135.6,447.8 1136.4,448.5 1136.9,455.3 1138.0,455.3 1139.2,454.7 1139.6,448.2 1140.4,448.9 1140.9,454.7 1142.0,454.7 1143.2,454.7 1143.6,447.9 1144.4,448.6 1144.9,454.7 1146.0,454.7 1147.2,454.7 1147.6,448.5 1148.4,449.2 1148.9,454.7 1150.0,454.7 1151.2,455.2 1151.6,448.9 1152.4,449.6 1152.9,455.2 1154.0,455.2 1155.2,454.7 1155.6,448.6 1156.4,449.3 1156.9,454.7 1158.0,454.7 1159.2,455.1 1159.6,447.8 1160.4,448.5 1160.9,455.1 1162.0,455.1 1163.2,455.3 1163.6,449.0 1164.4,449.7 1164.9,455.3 1166.0,455.3 1167.2,454.8 1167.6,448.9 1168.4,449.6 1168.9,454.8 1170.0,454.8 1171.2,454.9 1171.6,448.3 1172.4,449.0 1172.9,454.9 1174.0,454.9 1175.2,455.4 1175.6,448.8 1176.4,449.5 1176.9,455.4 1178.0,455.4 1179.2,454.7 1179.6,448.2 1180.4,448.9 1180.9,454.7 1182.0,454.7 1183.2,455.0 1183.6,448.1 1184.4,448.8 1184.9,455.0 1186.0,455.0 1187.2,454.8 1187.6,448.0 1188.4,448.7 1188.9,454.8 1190.0,454.8 1191.2,455.2 1191.6,447.6 1192.4,448.3 1192.9,455.2 1194.0,455.2 1195.2,455.0 1195.6,448.2 1196.4,448.9 1196.9,455.0 1198.0,455.0 1199.2,454.6 1199.6,448.1 1200.0,448.8 1200.0,454.6 1200.0,454.6" fill="none" stroke="#ffff20" stroke-width="1.7"/>
</g>
<path d="M193 102V484M189 105.9H193M189 109.7H193M189 113.5H193M185 117.3H193M189 121.2H193M189 125.0H193M189 128.8H193M189 132.6H193M189 136.4H193M189 140.2H193M189 144.1H193M185 147.9H193M189 151.7H193M189 155.5H193M189 159.3H193M189 163.2H193M189 167.0H193M189 170.8H193M189 174.6H193M185 178.4H193M189 182.2H193M189 186.1H193M189 189.9H193M189 193.7H193M189 197.5H193M189 201.3H193M189 205.1H193M185 209.0H193M189 212.8H193M189 216.6H193M189 220.4H193M189 224.2H193M189 228.0H193M189 231.9H193M189 235.7H193M185 239.5H193M189 243.3H193M189 247.1H193M189 251.0H193M189 254.8H193M189 258.6H193M189 262.4H193M189 266.2H193M185 270.0H193M189 273.9H193M189 277.7H193M189 281.5H193M189 285.3H193M189 289.1H193M189 292.9H193M189 296.8H193M185 300.6H193M189 304.4H193M189 308.2H193M189 312.0H193M189 315.9H193M189 319.7H193M189 323.5H193M189 327.3H193M185 331.1H193M189 334.9H193M189 338.8H193M189 342.6H193M189 346.4H193M189 350.2H193M189 354.0H193M189 357.8H193M185 361.7H193M189 365.5H193M189 369.3H193M189 373.1H193M189 376.9H193M189 380.7H193M189 384.6H193M189 388.4H193M185 392.2H193M189 396.0H193M189 399.8H193M189 403.7H193M189 407.5H193M189 411.3H193M189 415.1H193M189 418.9H193M185 422.7H193M189 426.6H193M189 430.4H193M189 434.2H193M189 438.0H193M189 441.8H193M189 445.6H193M189 449.5H193M185 453.3H193M189 457.1H193M189 460.9H193M189 464.7H193M189 468.5H193M189 472.4H193M189 476.2H193M189 480.0H193" stroke="#ffff00" stroke-width="1" fill="none"/>
<path d="M196 487.5H1200M211.5 488V491.5M227.5 488V491.5M243.5 488V491.5M259.5 488V495M275.5 488V491.5M291.5 488V491.5M307.5 488V491.5M323.5 488V491.5M339.5 488V495M355.5 488V491.5M371.5 488V491.5M387.5 488V491.5M403.5 488V491.5M419.5 488V495M435.5 488V491.5M451.5 488V491.5M467.5 488V491.5M483.5 488V491.5M499.5 488V495M515.5 488V491.5M531.5 488V491.5M547.5 488V491.5M563.5 488V491.5M579.5 488V495M595.5 488V491.5M611.5 488V491.5M627.5 488V491.5M643.5 488V491.5M659.5 488V495M675.5 488V491.5M691.5 488V491.5M707.5 488V491.5M723.5 488V491.5M739.5 488V495M755.5 488V491.5M771.5 488V491.5M787.5 488V491.5M803.5 488V491.5M819.5 488V495M835.5 488V491.5M851.5 488V491.5M867.5 488V491.5M883.5 488V491.5M899.5 488V495M915.5 488V491.5M931.5 488V491.5M947.5 488V491.5M963.5 488V491.5M979.5 488V495M995.5 488V491.5M1011.5 488V491.5M1027.5 488V491.5M1043.5 488V491.5M1059.5 488V495M1075.5 488V491.5M1091.5 488V491.5M1107.5 488V491.5M1123.5 488V491.5M1139.5 488V495M1155.5 488V491.5M1171.5 488V491.5M1187.5 488V491.5" stroke="#202020" stroke-width="1" fill="none"/>
<path d="M372 147L453 157M453 157L445 151M453 157L445 163" stroke="#d02020" stroke-width="1" fill="none"/>
</svg>
<div class="yl" style="top:110.3px">8</div><div class="yl" style="top:140.9px">6</div><div class="yl" style="top:171.4px">4</div><div class="yl" style="top:202.0px">2</div><div class="yl" style="top:232.5px">0</div><div class="yl" style="top:263.0px">-2</div><div class="yl" style="top:293.6px">-4</div><div class="yl" style="top:324.1px">-6</div><div class="yl" style="top:354.7px">-8</div><div class="yl" style="top:385.2px">-10</div><div class="yl" style="top:415.7px">-12</div><div class="yl" style="top:446.3px">-14</div>
<div class="xl" style="left:234.5px">190000</div><div class="xl" style="left:314.5px">195000</div><div class="xl" style="left:394.5px">200000</div><div class="xl" style="left:474.5px">205000</div><div class="xl" style="left:554.5px">210000</div><div class="xl" style="left:634.5px">215000</div><div class="xl" style="left:714.5px">220000</div><div class="xl" style="left:794.5px">225000</div><div class="xl" style="left:874.5px">230000</div><div class="xl" style="left:954.5px">235000</div><div class="xl" style="left:1034.5px">240000</div><div class="xl" style="left:1114.5px">245000</div>
<div class="a" style="left:149px;top:273px;width:20px;height:40px"><div style="position:absolute;left:-10px;top:12px;width:40px;height:16px;transform:rotate(-90deg);color:#ffff00;font-weight:bold;font-size:11.5px;line-height:16px;text-align:center">[rpm]</div></div>
<div class="a" style="left:670px;top:510px;width:55px;text-align:center;font-weight:bold;color:#1a1a1a;font-size:11px;line-height:14px">[ms]</div>
<!-- annotation -->
<div class="a" style="left:232px;top:128px;color:#e02020;font-size:14.8px;line-height:18px;white-space:nowrap">速度先是正的，后<br>来又一直是负值，<br>此时力矩一直在正<br>向的最大限幅</div>
<!-- legend -->
<div class="a" style="left:878px;top:102px;width:322px;height:15px;background:#ffff00;color:#000;font-size:10.8px;line-height:15px;padding-left:2px;white-space:nowrap">VECTORMV_03.r63[1]: Speed actual value, Smoothed with p0045</div>
<div class="a" style="left:880px;top:117px;color:#3858d8;font-size:10.6px;line-height:14px;white-space:nowrap">VECTORMV_03.r60: Speed setpoint before the setpoint filter</div>
<!-- v scrollbar -->
<div class="a" style="left:1225px;top:86px;width:20px;height:413px;background:#000"></div>
<div class="sb" style="left:1225px;top:86px;width:20px;height:15px"></div>
<div class="a" style="left:1231px;top:91px;border-left:4px solid transparent;border-right:4px solid transparent;border-bottom:4px solid #000;width:0;height:0"></div>
<div class="sb" style="left:1225px;top:484px;width:20px;height:15px"></div>
<div class="a" style="left:1231px;top:490px;border-left:4px solid transparent;border-right:4px solid transparent;border-top:4px solid #000;width:0;height:0"></div>
<div class="a" style="left:1227px;top:113px;width:16px;height:4px;border:2px solid #fffcd0;border-bottom:none"></div>
<div class="a" style="left:1227px;top:464px;width:16px;height:4px;border:2px solid #fffcd0;border-top:none"></div>
<div class="a" style="left:1235px;top:115px;width:1px;height:351px;background:#fffcd0"></div>
<!-- h scrollbar -->
<div class="a" style="left:179px;top:524px;width:1037px;height:19px;background:#000"></div>
<div class="sb" style="left:179px;top:524px;width:16px;height:19px"></div>
<div class="a" style="left:184px;top:529px;border-top:4px solid transparent;border-bottom:4px solid transparent;border-right:4px solid #000;width:0;height:0"></div>
<div class="sb" style="left:1200px;top:524px;width:16px;height:19px"></div>
<div class="a" style="left:1206px;top:529px;border-top:4px solid transparent;border-bottom:4px solid transparent;border-left:4px solid #000;width:0;height:0"></div>
<div class="a" style="left:741px;top:527px;width:185px;height:15px;border:2px solid #fffcd0;border-top:none;border-bottom:none"></div>
<div class="a" style="left:741px;top:527px;width:5px;height:15px;border-top:2px solid #fffcd0;border-bottom:2px solid #fffcd0"></div>
<div class="a" style="left:921px;top:527px;width:5px;height:15px;border-top:2px solid #fffcd0;border-bottom:2px solid #fffcd0"></div>
<div class="a" style="left:745px;top:534px;width:177px;height:1px;background:#fffcd0"></div>
<div class="a" style="left:146px;top:549px;width:1104px;height:1px;background:#000"></div>

<!-- bottom tabs -->
<div class="a" style="left:141px;top:552px;width:1110px;height:1px;background:#b4b0a0"></div><div class="a" style="left:141px;top:553px;width:1110px;height:1px;background:#7a766a"></div>
<div class="btab" style="left:145px;width:139px;padding-left:24px">GM150_CU320_2_DP</div>
<div class="btab" style="left:284px;width:112px;padding-left:26px">VECTORMV_03</div>
<div class="btab" style="left:398px;width:110px;padding-left:26px">TM15DI_DO_04</div>
<div class="btab" style="left:509px;top:551px;height:24px;width:96px;padding-left:27px;line-height:21px;border-bottom:none">Device trace</div>
<div class="btab" style="left:605px;width:121px;padding-left:26px">Object comparison</div>
<div class="btab" style="left:727px;width:95px;padding-left:26px">CU_GM_126</div>

<svg class="a" style="left:150px;top:555px" width="17" height="17"><path d="M1.5 15.5V3.5L3.5 1H8V13.5H6" fill="#e8e8e8" stroke="#000" stroke-width="1.3"/><path d="M1.5 3.5H6V15.5H1.5Z" fill="#9aa" stroke="#000" stroke-width="1.3"/><path d="M1.8 9H5.7V15H1.8Z" fill="#f0f0f0"/><path d="M7 11.5H13.5L15.5 10V13.5L13.5 15.5H7Z" fill="#fff" stroke="#000" stroke-width="1.4"/></svg>
<svg class="a" style="left:292px;top:555px" width="13" height="16"><rect x="0.7" y="0.7" width="11.6" height="14.6" fill="#f0f070" stroke="#000" stroke-width="1.4"/><path d="M1 2H12" stroke="#fff" stroke-width="1"/><path d="M2.5 5.5H10.5M2.5 7.5H10.5M2.5 9.5H10.5M2.5 11.5H10.5M2.5 13.5H10.5M6.5 4.5V14" stroke="#000" stroke-width="1"/></svg>
<svg class="a" style="left:403px;top:555px" width="11" height="16"><rect x="0" y="0" width="11" height="16" fill="#808080"/><path d="M3.5 5.5C3 2.5 8 2.5 7.5 5.5M3.5 12.5C3 9.5 8 9.5 7.5 12.5" stroke="#fff" stroke-width="1.4" fill="none"/></svg>
<svg class="a" style="left:512px;top:557px" width="16" height="15"><rect x="0" y="0" width="16" height="15" fill="#000"/><rect x="1" y="1" width="14" height="6.5" fill="#1a8a1a"/><rect x="1" y="8" width="14" height="6" fill="#10106a"/><path d="M1 6H3.5V2H6.5L9 6H15" stroke="#c8f0c8" stroke-width="1" fill="none"/><path d="M2 11H14" stroke="#d8d8ff" stroke-width="1" stroke-dasharray="1.5 1.5"/></svg>
<svg class="a" style="left:610px;top:555px" width="17" height="16"><circle cx="5" cy="4" r="3.2" fill="#0a10e0"/><circle cx="12.5" cy="5" r="2.6" fill="#f08a10"/><path d="M2 9H7M4.5 9V12M9.5 9.5H14.5M12 9.5V12" stroke="#000" stroke-width="1.6"/><rect x="3" y="12" width="10.5" height="3" fill="#000"/></svg>
<svg class="a" style="left:734px;top:555px" width="13" height="16"><rect x="0.7" y="0.7" width="11.6" height="14.6" fill="#f0f070" stroke="#000" stroke-width="1.4"/><path d="M1 2H12" stroke="#fff" stroke-width="1"/><path d="M2.5 5.5H10.5M2.5 7.5H10.5M2.5 9.5H10.5M2.5 11.5H10.5M2.5 13.5H10.5M6.5 4.5V14" stroke="#000" stroke-width="1"/></svg>
<div class="a" style="left:0;top:575px;width:1251px;height:1px;background:#aca899"></div>
<div class="a" style="left:0;top:576px;width:1251px;height:1px;background:#fff"></div>
<div class="a" style="left:0;top:580px;width:1251px;height:1px;background:#aca899"></div>
<div class="a" style="left:0;top:581px;width:1251px;height:1px;background:#f4f2e8"></div>
<div class="a" style="left:0;top:583px;width:1251px;height:1px;background:#d8d4c8"></div>
<div class="a" style="left:0;top:585px;width:1251px;height:1px;background:#fcfcf0"></div>
<!-- status bar -->
<div class="a" style="left:0;top:586px;font-size:10.8px;line-height:14px;white-space:nowrap">gram</div>
<div class="a" style="left:31px;top:585px;width:1px;height:7px;background:#aca899"></div>
<svg class="a" style="left:37px;top:584px" width="17" height="8"><rect x="0" y="1" width="16" height="4" fill="#30d030"/><rect x="0" y="5" width="16" height="1" fill="#fff"/><rect x="0" y="6" width="16" height="2" fill="#707080"/><path d="M0.5 0V8M4.5 2V8M11.5 2V8M15.5 0V8" stroke="#000" stroke-width="1"/></svg>
<div class="a" style="left:57px;top:586px;font-size:10.8px;line-height:14px;white-space:nowrap">PICO server</div>
<div class="a" style="left:120px;top:585px;width:1px;height:7px;background:#aca899"></div>
<svg class="a" style="left:128px;top:584px" width="17" height="8"><rect x="0" y="1" width="16" height="4" fill="#30d030"/><rect x="0" y="5" width="16" height="1" fill="#fff"/><rect x="0" y="6" width="16" height="2" fill="#707080"/><path d="M0.5 0V8M4.5 2V8M11.5 2V8M15.5 0V8" stroke="#000" stroke-width="1"/></svg>
<div class="a" style="left:149px;top:586px;font-size:10.8px;line-height:14px;white-space:nowrap">Target system output</div>
<div class="a" style="left:253px;top:585px;width:1px;height:7px;background:#aca899"></div>
<svg class="a" style="left:261px;top:584px" width="17" height="8"><rect x="0" y="1" width="16" height="4" fill="#30d030"/><rect x="0" y="5" width="16" height="1" fill="#fff"/><rect x="0" y="6" width="16" height="2" fill="#707080"/><path d="M0.5 0V8M4.5 2V8M11.5 2V8M15.5 0V8" stroke="#000" stroke-width="1"/></svg>
<div class="a" style="left:282px;top:586px;font-size:10.8px;line-height:14px;white-space:nowrap">Trace info</div>
<div class="a" style="left:336px;top:585px;width:1px;height:7px;background:#aca899"></div>
<svg class="a" style="left:344px;top:584px" width="17" height="8"><rect x="0" y="1" width="16" height="4" fill="#30d030"/><rect x="0" y="5" width="16" height="1" fill="#fff"/><rect x="0" y="6" width="16" height="2" fill="#707080"/><path d="M0.5 0V8M4.5 2V8M11.5 2V8M15.5 0V8" stroke="#000" stroke-width="1"/></svg>
<div class="a" style="left:365px;top:586px;font-size:10.8px;line-height:14px;white-space:nowrap">Object comparison output</div>
<div class="a" style="left:492px;top:585px;width:1px;height:7px;background:#aca899"></div>
</body></html>
